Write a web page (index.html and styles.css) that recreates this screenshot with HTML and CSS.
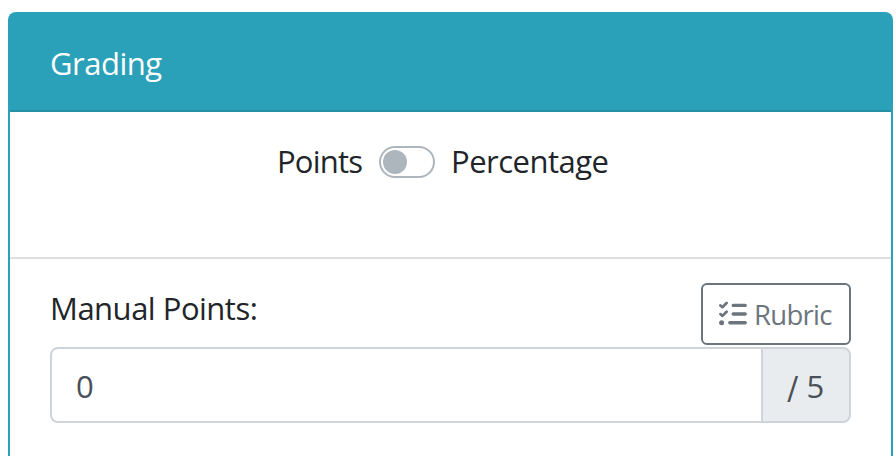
FILE: index.html
```html
<!DOCTYPE html>
<html lang="en">
<head>
<meta charset="utf-8">
<title>Grading</title>
<link rel="stylesheet" href="styles.css">
</head>
<body>
<section class="card">
  <header class="card-header"><span class="title">Grading</span></header>
  <div class="mode">
    <span class="points">Points</span>
    <span class="switch"></span>
    <span class="percentage">Percentage</span>
  </div>
  <div class="card-body">
    <div class="row">
      <label class="manual" for="points">Manual Points:</label>
      <button class="rubric" type="button">
        <svg width="28" height="26" viewBox="0 0 28 26" fill="none" stroke="currentColor" stroke-linecap="round" stroke-linejoin="round">
          <path stroke-width="2.7" d="M1.4 4.4 3.4 6.2 7.6 2M1.4 13.1 3.4 14.9 7.6 10.7"/>
          <path stroke-width="3.4" d="M14.2 4.4H26.2M14.2 13H26.2M10.8 21.7H26.2"/>
          <circle cx="2.6" cy="21.7" r="2.5" fill="currentColor" stroke="none"/>
        </svg>
        <span class="rubric-text">Rubric</span>
      </button>
    </div>
    <div class="input-group">
      <input id="points" class="field" type="text" value="0">
      <span class="addon"><span class="slash">/</span> 5</span>
    </div>
  </div>
</section>
</body>
</html>
```
FILE: styles.css
```css
* { box-sizing: border-box; }
body {
  height: 100vh;
  margin: 0;
  padding: 12px 3px 0 8px;
  background: #fff;
  color: #212529;
  font: 31px/48px "Open Sans", "Noto Sans", sans-serif;
  letter-spacing: -0.5px;
}
.card {
  height: 100%;
  border: 2px solid #2aa1b8;
  border-bottom: 0;
  border-radius: 8px 8px 0 0;
}
.card-header {
  height: 98px;
  padding: 25px 40px;
  background: #2ba1b9;
  border-bottom: 2px solid #2790a5;
  color: #fff;
}
.mode {
  display: flex;
  height: 147px;
  padding: 25px 0 0 267px;
  border-bottom: 2px solid #dfdfdf;
}
.points {
  width: 86px;
  letter-spacing: -0.8px;
}
.switch {
  width: 56px;
  height: 32px;
  margin: 9px 16px 0;
  padding: 2px;
  border: 2px solid #adb5bd;
  border-radius: 16px;
}
.switch::before {
  content: "";
  display: block;
  width: 24px;
  height: 24px;
  border-radius: 50%;
  background: #adb5bd;
}
.card-body { padding: 24px 40px 0; }
.row { display: flex; justify-content: space-between; height: 64px; }
.manual { padding-top: 1px; }
.rubric {
  display: flex;
  align-items: center;
  gap: 7px;
  width: 150px;
  height: 62px;
  padding: 0 0 0 16px;
  border: 2px solid #6c757d;
  border-radius: 6px;
  background: #fff;
  color: #6c757d;
  font: 27.5px/40px "Open Sans", sans-serif;
  letter-spacing: -0.7px;
}
.rubric svg { flex: none; }
.rubric-text { padding-top: 2px; }
.input-group { display: flex; height: 76px; }
.field {
  flex: 1;
  min-width: 0;
  padding: 2px 24px 0;
  border: 2px solid #ced4da;
  border-radius: 8px 0 0 8px;
  color: #495057;
  font: inherit;
}
.addon {
  width: 90px;
  margin-left: -2px;
  padding: 13px 0 0 24px;
  border: 2px solid #ced4da;
  border-radius: 0 8px 8px 0;
  background: #e9ecef;
  color: #495057;
  letter-spacing: 0;
  white-space: nowrap;
}
.slash {
  display: inline-block;
  transform: translateY(2px) scaleY(1.18);
}
```
